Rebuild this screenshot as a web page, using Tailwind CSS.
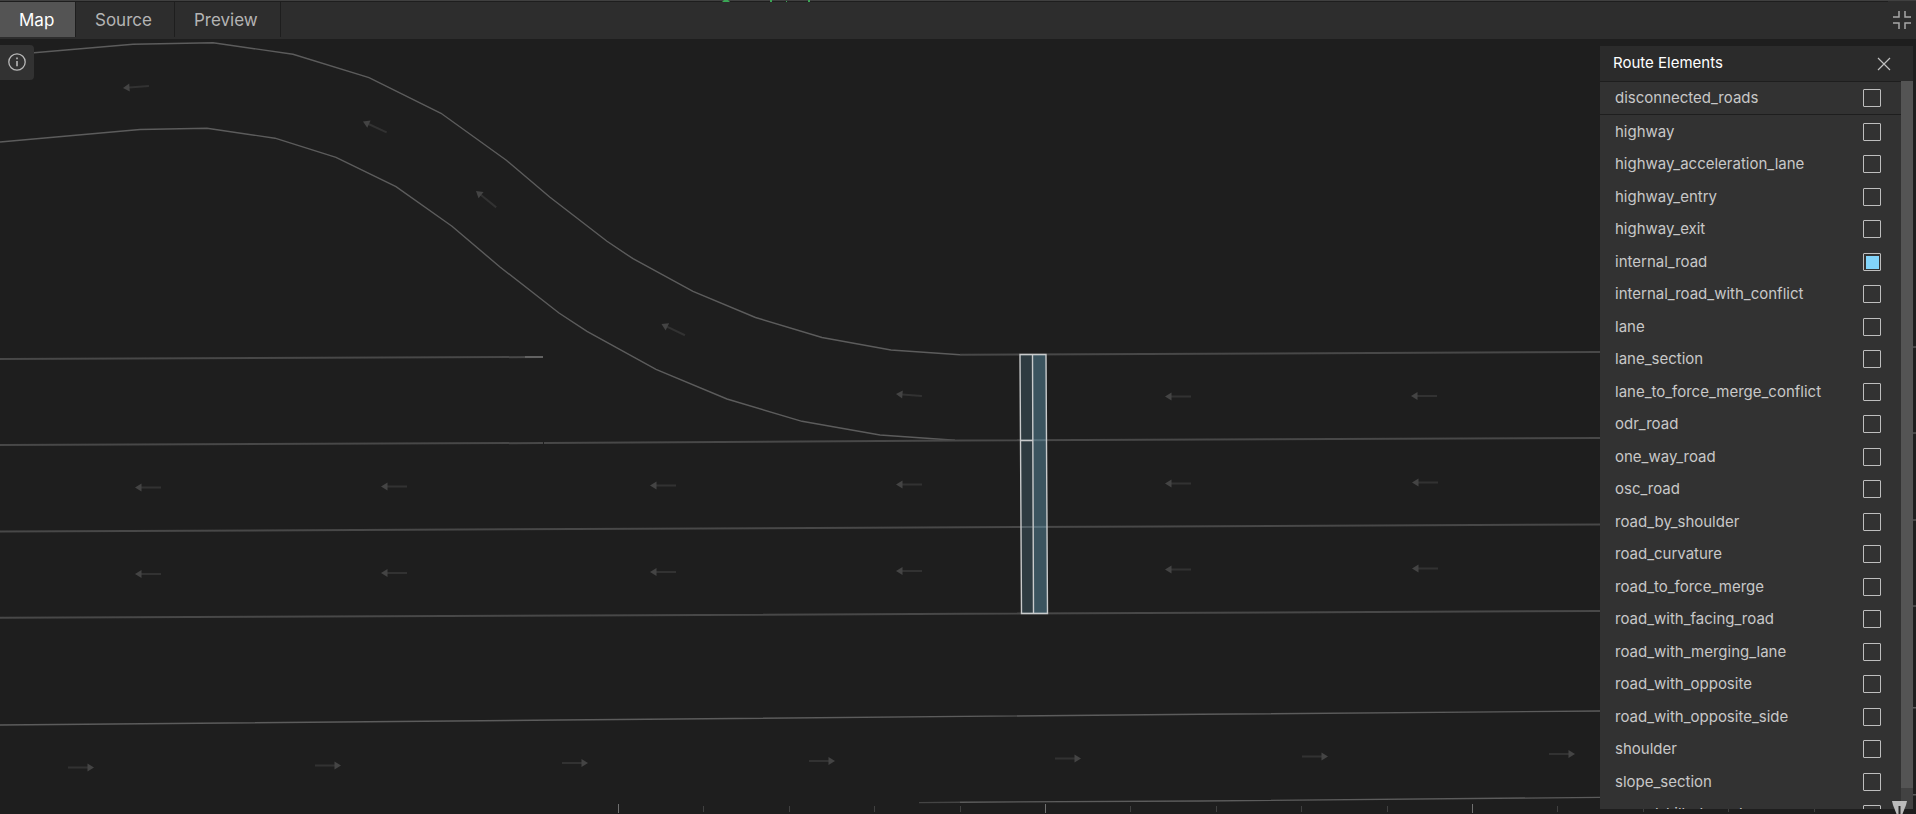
<!DOCTYPE html>
<html lang="en">
<head>
    <meta charset="UTF-8">
    <meta name="viewport" content="width=device-width, initial-scale=1.0">
    <script src="https://cdn.jsdelivr.net/npm/@tailwindcss/browser@4"></script>
    <title>Map</title>
</head>
<body class="bg-[#1e1e1e] h-screen overflow-hidden flex flex-col font-['Inter',sans-serif] text-[#c8c8c8]">
    <!-- Tab bar -->
    <header class="relative shrink-0 h-[39px] flex items-start justify-between bg-[#2d2d2d] border-t border-[#404040]">
        <nav class="flex h-9 w-full border-t border-[#1e1e1e] text-[17px] leading-9 text-[#b4b4b4]">
            <button class="w-[76px] text-left pl-[19px] bg-[#545454] border-r border-[#1e1e1e] text-white">Map</button>
            <button class="w-[99px] text-left pl-[19px] border-r border-[#1e1e1e]">Source</button>
            <button class="w-[106px] text-left pl-[19px] border-r border-[#1e1e1e]">Preview</button>
        </nav>
        <button class="p-[5px] pt-[10px]" aria-label="Exit full screen">
            <svg class="w-[18px] h-[18px]" viewBox="0 0 18 18" fill="none" stroke="#a8a8a8" stroke-width="1.5"><path d="M6 0V6H0M12 0V6H18M6 18V12H0M12 18V12H18"/></svg>
        </button>
        <svg class="absolute left-[720px] -top-px w-[92px] h-[2px]" viewBox="0 0 92 2" fill="#3aa655"><path d="M4 0H8L10 2H2ZM50 0H52V2H50ZM66 1H67V2H66ZM88 0H90V2H88Z"/></svg>
    </header>

    <main class="relative flex-1 min-h-0 overflow-hidden">
        <!-- Road map -->
        <svg id="map" class="absolute left-0 top-0 w-[1916px] h-[775px]" viewBox="0 39 1916 775" fill="none">
            <g stroke="#5c5c5c" stroke-width="1.4">
                <path d="M0 55L34 52.7L133 44.3L213 42.7L293 54.3L369 77.7L441 113.3L506 160L550 197.3L607 241.3L633 258.7L693 291.3L755.5 317.5L822 337.5L891 350L960 354.7"/>
                <path d="M0 142L140 129.5L207 128.3L275 138.2L336 157.3L396 186.7L452 226.3L500 267L559 313L587 331.3L656 369.3L727 399L802 421.3L880 435L955 440.3"/>
                <path d="M0 725L560 720L1200 714.3L1600 711L1916 707.7M960 802.2L1200 801L1600 797.4L1916 794.7"/>
                <path d="M919 802.6L960 802.2" stroke="#444"/>
            </g>
            <g stroke="#484848" stroke-width="2">
                <path d="M960 354.7L1020 354.5L1600 352L1900 347.5L1916 347"/>
                <path d="M0 359L543 357M0 445L543 443M544 443L960 440.5L1600 438L1900 433.5L1916 433"/>
                <path d="M0 531.5L640 528.7L1160 526.5L1600 524.5L1900 520.5L1916 520M0 617.7L640 615.2L1600 611L1900 606.5L1916 606"/>
                <path d="M525 357L543 357" stroke="#626262"/>
            </g>
            <g id="arrows"></g>
            <!-- Internal road -->
            <path d="M1020 354.5H1032.5L1033.5 613.5H1021.5Z" fill="#81d4fa" fill-opacity=".16"/>
            <path d="M1032.5 354.5H1046L1047.5 613.5H1033.5Z" fill="#81d4fa" fill-opacity=".3"/>
            <path d="M1020 354.5H1046L1047.5 613.5H1021.5ZM1032.5 354.5L1033.5 613.5M1020 440.5H1033" stroke="#c8cacb" stroke-width="1.4"/>
            <g id="ruler" stroke-width="1"></g>
        </svg>

        <button class="absolute left-0 top-[6px] w-[34px] h-[35px] flex items-start justify-center pt-2 rounded-r bg-[#323232]" aria-label="Info">
            <svg class="w-[18px] h-[18px]" viewBox="0 0 18 18" fill="none" stroke="#b8b8b8" stroke-width="1.3"><circle cx="9" cy="9" r="8.2"/><path d="M9 8V13.3M9 4.4V6.2" stroke-width="1.6"/></svg>
        </button>

        <!-- Route elements -->
        <section class="absolute right-[3px] top-[7px] bottom-[5px] w-[313px] flex flex-col bg-[#323232]">
            <div class="flex shrink-0 items-center justify-between h-[35px] pl-[13px] pr-[22px] bg-[#2b2b2b]">
                <h2 class="text-[15px] text-white">Route Elements</h2>
                <button aria-label="Close"><svg class="w-[14px] h-[14px]" viewBox="0 0 14 14" stroke="#c0c0c0" stroke-width="1.2"><path d="M1 1L13 13M13 1L1 13"/></svg></button>
            </div>
            <div class="flex flex-1 min-h-0">
                <ul id="route-elements" class="flex-1 overflow-hidden border-t border-[#1e1e1e] text-[15px] leading-5"></ul>
                <div class="w-3 bg-[#424242] pb-[21px]"><div class="h-full bg-[#545454]"></div></div>
            </div>
        </section>

        <svg class="absolute right-[9px] bottom-0 w-[15px] h-[14px]" viewBox="0 0 15 14"><path d="M0 1H15L14 5L10.500 14H4.500L1 5Z" fill="#bcbcbc"/><path d="M7.500 6V14" stroke="#2a2a2a" stroke-width="2"/></svg>
    </main>

    <script>
        const names = [
            "disconnected_roads", "highway", "highway_acceleration_lane", "highway_entry", "highway_exit",
            "internal_road", "internal_road_with_conflict", "lane", "lane_section", "lane_to_force_merge_conflict",
            "odr_road", "one_way_road", "osc_road", "road_by_shoulder", "road_curvature", "road_to_force_merge",
            "road_with_facing_road", "road_with_merging_lane", "road_with_opposite", "road_with_opposite_side",
            "shoulder", "slope_section", "speed_killed_road"
        ];
        document.getElementById("route-elements").innerHTML = names.map((name, i) => `
            <li class="${i === 0 ? "h-[33px] border-b border-[#1e1e1e]" : "h-8 even:h-[33px]"}">
                <label class="h-full flex items-center justify-between pl-[15px] pr-5">
                    ${name}
                    <input type="checkbox" ${name === "internal_road" ? "checked" : ""} class="appearance-none w-[18px] h-[18px] rounded-[1px] border border-[#bebebe] bg-clip-content pt-[2px] pl-[2px] pr-px pb-px checked:bg-[#81d4fa]">
                </label>
            </li>
        `).join("");

        // Driving direction arrows: tip x, tip y, tail x, tail y
        const arrows = [
            [123, 88, 150, 86], [363, 121.5, 387, 132.5], [476, 191, 497, 208], [661.5, 324, 685.5, 335.5],
            [896, 394, 922, 396], [1165, 396.5, 1191, 396.5], [1411, 396, 1437, 396],
            [135, 487.5, 161, 487.5], [381, 486.5, 407, 486.5], [650, 485.5, 676, 485.5], [896, 484.5, 922, 484.5], [1165, 483.5, 1191, 483.5], [1412, 482.5, 1438, 482.5],
            [135, 574, 161, 574], [381, 573, 407, 573], [650, 572, 676, 572], [896, 571, 922, 571], [1165, 569.5, 1191, 569.5], [1412, 568.5, 1438, 568.5],
            [94, 767.5, 68, 767.5], [341, 765.5, 315, 765.5], [588, 763, 562, 763], [835, 761, 809, 761], [1081, 758.5, 1055, 758.5], [1328, 756.5, 1302, 756.5], [1575, 754, 1549, 754]
        ];
        document.getElementById("arrows").innerHTML = arrows.map(([x, y, tx, ty]) => {
            const angle = Math.atan2(ty - y, tx - x) * 180 / Math.PI;
            return `<g transform="translate(${x} ${y}) rotate(${angle})"><path d="M6 0H26" stroke="#323232" stroke-width="2"/><path d="M0 0L6.5 -4V4Z" fill="#444"/></g>`;
        }).join("");

        // Ruler ticks, every fifth is a major one
        let ticks = "";
        for (let i = 0; i < 16; i++) {
            const x = Math.round(618 + i * 85.4) + 0.5;
            ticks += i % 5 === 0
                ? `<path d="M${x} 804V813" stroke="#707070"/>`
                : `<path d="M${x} 806V812" stroke="#404040"/>`;
        }
        document.getElementById("ruler").innerHTML = ticks;
    </script>
</body>
</html>
